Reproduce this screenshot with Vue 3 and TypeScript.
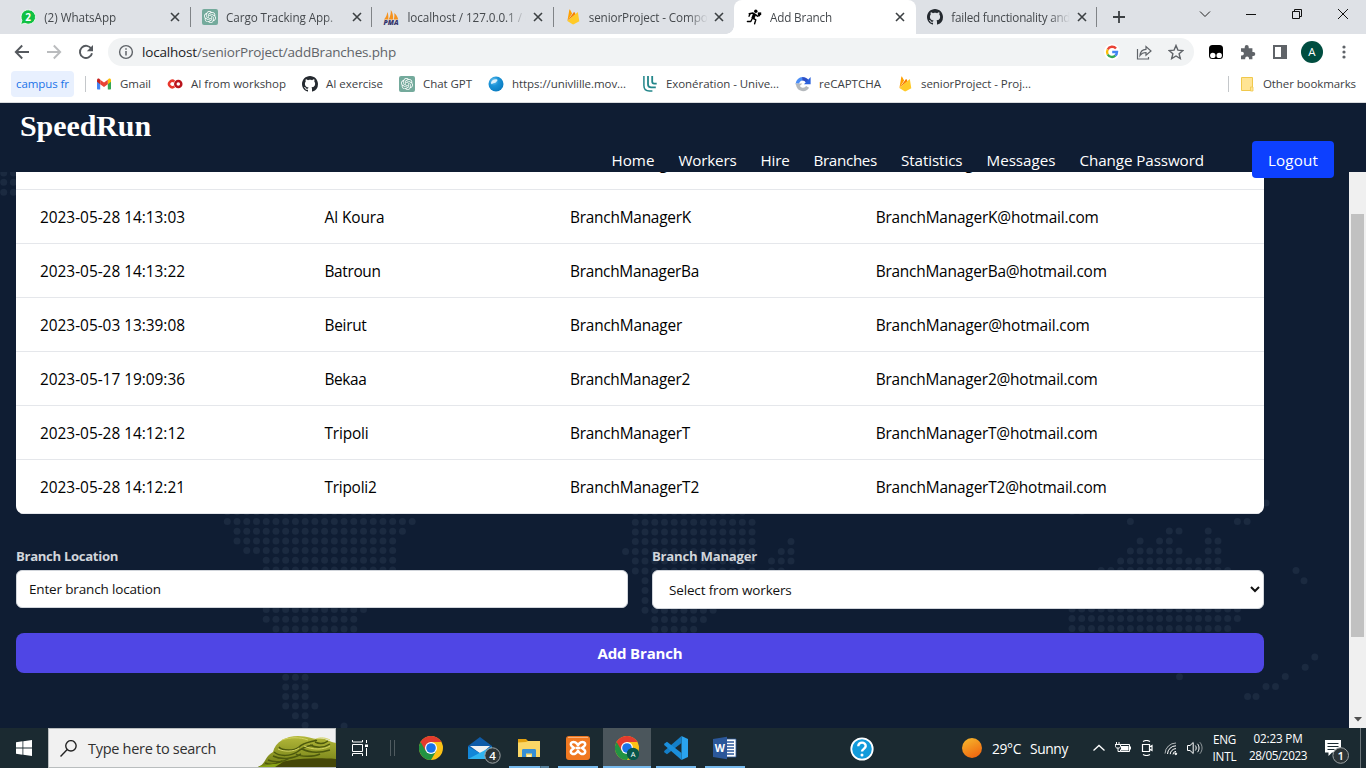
<script setup lang="ts">
interface Tab { icon: string; title: string; width: number; active?: boolean }
interface Bookmark { icon: string; label: string; width: number }
interface Row { date: string; place: string; manager: string; mail: string; w: number[] }
interface Mark { text: string; x: number; y: number; kind: string }

// Spreads the letters of an element so that its text takes the given width.
const vFit = {
  mounted(el: HTMLElement, binding: { value: number }) {
    const length = (el.textContent || '').length
    if (!length || !binding.value) return
    const natural = el.getBoundingClientRect().width
    el.style.letterSpacing = ((binding.value - natural) / length).toFixed(3) + 'px'
  },
}

// Lettering that sits on top of an icon.
const marks: Record<string, Mark> = {
  whatsapp: { text: '2', x: 8.1, y: 11.6, kind: 'count' },
  pma: { text: 'PMA', x: 8, y: 15.8, kind: 'pma' },
  chromeuser: { text: 'A', x: 18, y: 20.7, kind: 'user' },
  mail: { text: '4', x: 24.5, y: 23.6, kind: 'badge' },
  word: { text: 'W', x: 6.9, y: 16, kind: 'word' },
}

const tabs: Tab[] = [
  { icon: 'whatsapp', title: '(2) WhatsApp', width: 72 },
  { icon: 'gpt', title: 'Cargo Tracking App.', width: 107 },
  { icon: 'pma', title: 'localhost / 127.0.0.1 / c', width: 123 },
  { icon: 'firebase', title: 'seniorProject - Compo', width: 119 },
  { icon: 'runner', title: 'Add Branch', width: 62, active: true },
  { icon: 'github', title: 'failed functionality and', width: 119 },
]

const bookmarks: Bookmark[] = [
  { icon: 'gmail', label: 'Gmail', width: 31 },
  { icon: 'co', label: 'AI from workshop', width: 95 },
  { icon: 'github', label: 'AI exercise', width: 57 },
  { icon: 'gpt', label: 'Chat GPT', width: 49 },
  { icon: 'globe', label: 'https://univlille.mov...', width: 114 },
  { icon: 'lille', label: 'Exonération - Unive...', width: 113 },
  { icon: 'recaptcha', label: 'reCAPTCHA', width: 62 },
  { icon: 'firebase', label: 'seniorProject - Proj...', width: 110 },
]

const links = [
  { label: 'Home', width: 43 },
  { label: 'Workers', width: 58 },
  { label: 'Hire', width: 29 },
  { label: 'Branches', width: 63.5 },
  { label: 'Statistics', width: 61.5 },
  { label: 'Messages', width: 69 },
  { label: 'Change Password', width: 124.5 },
]

const rows: Row[] = [
  { date: '', place: '', manager: 'BranchManager', mail: 'BranchManager', w: [0, 0, 112, 112] },
  { date: '2023-05-28 14:13:03', place: 'Al Koura', manager: 'BranchManagerK', mail: 'BranchManagerK@hotmail.com', w: [145, 60, 121, 223] },
  { date: '2023-05-28 14:13:22', place: 'Batroun', manager: 'BranchManagerBa', mail: 'BranchManagerBa@hotmail.com', w: [145, 56, 129, 231] },
  { date: '2023-05-03 13:39:08', place: 'Beirut', manager: 'BranchManager', mail: 'BranchManager@hotmail.com', w: [145, 42, 112, 214] },
  { date: '2023-05-17 19:09:36', place: 'Bekaa', manager: 'BranchManager2', mail: 'BranchManager2@hotmail.com', w: [145, 42, 120, 222] },
  { date: '2023-05-28 14:12:12', place: 'Tripoli', manager: 'BranchManagerT', mail: 'BranchManagerT@hotmail.com', w: [145, 44, 120, 222] },
  { date: '2023-05-28 14:12:21', place: 'Tripoli2', manager: 'BranchManagerT2', mail: 'BranchManagerT2@hotmail.com', w: [145, 52, 129, 231] },
]

// World map: runs of dots as [origin x, y, first column, last column].
const runs: number[][] = [
  [3.7, 173, 0, 1], [3.7, 182.3, 0, 1], [3.7, 192.3, 0, 1],
  [227.3, 511.7, 0, 17], [227.3, 521.5, 0, 19], [227.3, 531.3, 1, 18], [227.3, 541, 1, 17],
  [227.3, 550.6, 2, 17], [227.3, 560.3, 4, 17], [227.3, 570, 4, 17], [227.3, 609.6, 4, 14],
  [227.3, 619.3, 4, 13], [227.3, 629, 5, 13], [227.3, 677.2, 6, 8], [227.3, 687, 6, 8],
  [227.3, 696.6, 6, 8], [227.3, 706, 6, 9], [227.3, 715.7, 7, 8], [227.3, 725.3, 8, 8], [227.3, 726, 12, 12],
  [635.3, 512, 0, 11], [635.3, 522.3, 0, 12], [635.3, 532.1, 0, 12], [635.3, 541.6, 0, 12], [635.3, 541.6, 16, 16],
  [635.3, 551.4, -1, 12], [635.3, 551.4, 15, 16], [635.3, 561, 0, 12], [635.3, 561, 14, 16],
  [635.3, 571, 0, 12], [635.3, 571, 14, 15], [635.3, 580.7, 1, 1], [635.3, 590.5, 1, 1], [635.3, 600.5, 1, 1],
  [635.3, 610.2, 1, 8], [635.3, 619.4, 2, 7], [635.3, 629.2, 2, 6],
  [1072, 511.5, 0, 1], [1072, 521.6, 6, 6], [1072, 521.6, 17, 18], [1072, 531, 10, 11], [1072, 531, 14, 14],
  [1072, 541, 7, 7], [1072, 541, 9, 10], [1072, 541, 14, 15], [1072, 551, 6, 11], [1072, 551, 14, 15],
  [1072, 561, 5, 15], [1072, 570.5, 3, 16], [1072, 609, 0, 17], [1072, 618.6, 0, 17], [1072, 628.4, 0, 16],
]
const singles: number[][] = [
  [1266, 503], [1296, 570.4], [1304, 580.8], [1314.8, 657], [1305.2, 667.3], [1285.3, 676.6],
  [1266, 686.4], [1275.5, 686.4], [1247.6, 696.6], [1256, 696.6], [1179.5, 676.7],
]
const dots: number[][] = [...singles]
for (const [x, y, from, to] of runs)
  for (let k = from; k <= to; k++) dots.push([x + k * 9.73, y])

const apps = [
  { icon: 'chrome', line: '' },
  { icon: 'mail', line: '' },
  { icon: 'explorer', line: 'split' },
  { icon: 'xampp', line: 'open' },
  { icon: 'chromeuser', line: 'active' },
  { icon: 'vscode', line: 'open' },
  { icon: 'word', line: 'open' },
]
const tray = ['chevron', 'battery', 'meet', 'wifi', 'volume']
</script>

<template>
  <div class="screen">
    <svg class="defs" aria-hidden="true">
      <defs>
        <linearGradient id="sunfill" x1="0.2" y1="0" x2="0.7" y2="1">
          <stop offset="0" stop-color="#f5b52c" /><stop offset="1" stop-color="#f0650f" />
        </linearGradient>
        <linearGradient id="hill" x1="0" y1="0" x2="0" y2="1">
          <stop offset="0" stop-color="#b4b83a" /><stop offset="1" stop-color="#6f7d14" />
        </linearGradient>
        <radialGradient id="ball" cx="0.35" cy="0.3" r="0.8">
          <stop offset="0" stop-color="#7cc9ef" /><stop offset="0.4" stop-color="#1c94d8" /><stop offset="1" stop-color="#0878bd" />
        </radialGradient>
      </defs>
      <symbol id="i-whatsapp" viewBox="0 0 16 16">
        <path d="M8.2.8a7.2 7.2 0 1 1-3.3 13.5L.7 15.4l1.2-4A7.2 7.2 0 0 1 8.2.8z" fill="#10c042" stroke="#fff" stroke-width=".8" />
      </symbol>
      <symbol id="i-gpt" viewBox="0 0 16 16">
        <rect width="16" height="16" rx="2" fill="#74aa9c" />
        <path transform="translate(2 2) scale(.5)" fill="#fff" d="M22.2819 9.8211a5.9847 5.9847 0 0 0-.5157-4.9108 6.0462 6.0462 0 0 0-6.5098-2.9A6.0651 6.0651 0 0 0 4.9807 4.1818a5.9847 5.9847 0 0 0-3.9977 2.9 6.0462 6.0462 0 0 0 .7427 7.0966 5.98 5.98 0 0 0 .511 4.9107 6.051 6.051 0 0 0 6.5146 2.9001A5.9847 5.9847 0 0 0 13.2599 24a6.0557 6.0557 0 0 0 5.7718-4.2058 5.9894 5.9894 0 0 0 3.9977-2.9001 6.0557 6.0557 0 0 0-.7475-7.0729zm-9.022 12.6081a4.4755 4.4755 0 0 1-2.8764-1.0408l.1419-.0804 4.7783-2.7582a.7948.7948 0 0 0 .3927-.6813v-6.7369l2.02 1.1686a.071.071 0 0 1 .038.052v5.5826a4.504 4.504 0 0 1-4.4945 4.4944zm-9.6607-4.1254a4.4708 4.4708 0 0 1-.5346-3.0137l.142.0852 4.783 2.7582a.7712.7712 0 0 0 .7806 0l5.8428-3.3685v2.3324a.0804.0804 0 0 1-.0332.0615L9.74 19.9502a4.4992 4.4992 0 0 1-6.1408-1.6464zM2.3408 7.8956a4.485 4.485 0 0 1 2.3655-1.9728V11.6a.7664.7664 0 0 0 .3879.6765l5.8144 3.3543-2.0201 1.1685a.0757.0757 0 0 1-.071 0l-4.8303-2.7865A4.504 4.504 0 0 1 2.3408 7.872zm16.5963 3.8558L13.1038 8.364 15.1192 7.2a.0757.0757 0 0 1 .071 0l4.8303 2.7913a4.4944 4.4944 0 0 1-.6765 8.1042v-5.6772a.79.79 0 0 0-.407-.667zm2.0107-3.0231l-.142-.0852-4.7735-2.7818a.7759.7759 0 0 0-.7854 0L9.409 9.2297V6.8974a.0662.0662 0 0 1 .0284-.0615l4.8303-2.7866a4.4992 4.4992 0 0 1 6.6802 4.66zM8.3065 12.863l-2.02-1.1638a.0804.0804 0 0 1-.038-.0567V6.0742a4.4992 4.4992 0 0 1 7.3757-3.4537l-.142.0805L8.704 5.459a.7948.7948 0 0 0-.3927.6813zm1.0976-2.3654l2.602-1.4998 2.6069 1.4998v2.9994l-2.5974 1.4997-2.6067-1.4997Z" />
      </symbol>
      <symbol id="i-pma" viewBox="0 0 16 16">
        <path d="M1 10.500C3 8 4 6 4.400 3c.9 2 1.100 4.500.9 7.500zM5.600 10.500C7.500 7 8 4 7.800 1c2 2.500 2.600 6 2.200 9.500zM10.600 10.500c.9-2.400 1-4.400.6-6.500 2 1.500 3.400 3.800 4 6.500z" fill="#f5921e" />
      </symbol>
      <symbol id="i-firebase" viewBox="0 0 16 16">
        <path d="M2.400 11.900 4.300.9c.1-.4.6-.5.8-.1l2 3.700z" fill="#ffa000" />
        <path d="m2.400 11.900 6.400-8.600c.2-.3.500-.3.700 0l1 2z" fill="#f57c00" />
        <path d="M2.400 12.100 12.200 3.400c.3-.2.600-.1.700.2l1.400 8.600-5.500 3.100c-.5.200-.9.200-1.300 0z" fill="#ffca28" />
      </symbol>
      <symbol id="i-runner" viewBox="0 0 16 16">
        <circle cx="9.800" cy="2.300" r="1.700" />
        <path d="M3.200 4.800 7 4l2.600 1.600 1.800 1.600 2.200-.7M6.600 8.800l3.200 2-1.200 4M6.300 9.500l-1.500 3H1.400M4.200 4.800 3 7.200" fill="none" stroke="#000" stroke-width="1.400" stroke-linejoin="round" stroke-linecap="round" />
        <path d="M7.200 4 10 6 8 10.400 5.300 9z" /><rect x="11.800" y="3.400" width="3.400" height="2.600" />
      </symbol>
      <symbol id="i-github" viewBox="0 0 16 16">
        <path fill="#24292f" d="M8 0C3.580 0 0 3.580 0 8c0 3.540 2.290 6.530 5.470 7.590.4.070.55-.17.55-.38 0-.19-.01-.82-.01-1.490-2.010.37-2.530-.49-2.690-.94-.09-.23-.48-.94-.82-1.130-.28-.15-.68-.52-.01-.53.63-.01 1.080.58 1.230.82.72 1.210 1.870.87 2.330.66.07-.52.28-.87.51-1.070-1.780-.2-3.640-.89-3.640-3.950 0-.87.31-1.590.82-2.150-.08-.2-.36-1.020.08-2.120 0 0 .67-.21 2.200.82.64-.18 1.320-.27 2-.27s1.360.09 2 .27c1.530-1.040 2.200-.82 2.200-.82.44 1.100.16 1.920.08 2.120.51.56.82 1.270.82 2.150 0 3.070-1.870 3.750-3.650 3.950.29.25.54.73.54 1.480 0 1.070-.01 1.930-.01 2.200 0 .21.15.46.55.38A8.010 8.010 0 0 0 16 8c0-4.420-3.580-8-8-8z" />
      </symbol>
      <symbol id="i-gmail" viewBox="0 0 16 16">
        <path d="M1 4.200v8.300c0 .6.400 1 1 1h2.200V7z" fill="#4285f4" /><path d="M15 4.200v8.300c0 .6-.4 1-1 1h-2.200V7z" fill="#34a853" />
        <path d="M11.800 3.800v4.400L15 5.800V4.200c0-1.500-1.500-2-2.500-1.200z" fill="#fbbc04" /><path d="M1 4.200v1.600l3.200 2.400V3.800L3.500 3C2.500 2.200 1 2.700 1 4.200z" fill="#c5221f" />
        <path d="M4.200 8.200V3.700L8 6.500l3.800-2.800v4.500L8 11z" fill="#ea4335" />
      </symbol>
      <symbol id="i-co" viewBox="0 0 16 16" fill="none" stroke-width="2.500">
        <path d="M7.400 5.600A3.200 3.200 0 1 0 7.400 10.400" stroke="#e8372c" /><circle cx="11.300" cy="8" r="3" stroke="#b9151d" />
      </symbol>
      <symbol id="i-globe" viewBox="0 0 16 16">
        <circle cx="8" cy="8" r="7.500" fill="url(#ball)" /><path d="M3 6.500c1-2.500 3-3.500 5.500-3.300 1.800.3.500 2.300-.7 3.200C6 7.300 4.500 7 3.400 8.300z" fill="#ddf1fb" />
      </symbol>
      <symbol id="i-lille" viewBox="0 0 16 16" fill="none" stroke="#23868a">
        <path d="M1.900 0v9.500c0 3.500 2.200 5.500 5.500 5.500h3" stroke-width="1.500" /><path d="M6 0v8.300c0 2.200 1.200 3.100 3.200 3.100h4.600" stroke-width="1.800" /><path d="M10.200 0v5.500c0 1.500.6 2.100 2 2.100h2.500" stroke-width="1.800" />
      </symbol>
      <symbol id="i-recaptcha" viewBox="0 0 16 16" fill="none" stroke-width="3.500">
        <path d="M2.400 7.600A5.600 5.600 0 0 1 7.600 2.700" stroke="#4a8df6" /><path d="M7.200 2.700a5.800 5.800 0 0 1 5.200 2.900" stroke="#2c50c8" /><path d="M15.600 1v7.200H9z" fill="#2c62dc" stroke="none" /><path d="M2.800 9c1 5.200 7.400 5.800 9.800 1.900" stroke="#b5b9bd" /><path d="M0 7.600h7.400L3 11.500z" fill="#b5b9bd" stroke="none" />
      </symbol>
      <symbol id="i-chrome" viewBox="0 0 24 24">
        <circle cx="12" cy="12" r="12" fill="#fbc116" />
        <path d="M1.600 6A12 12 0 0 0 12 24l5.200-9L12 12z" fill="#229342" /><path d="M12 6h10.400A12 12 0 0 0 1.600 6l5.200 9z" fill="#e33b2e" />
        <circle cx="12" cy="12" r="6" fill="#fff" /><circle cx="12" cy="12" r="4.800" fill="#1a73e8" />
      </symbol>
      <symbol id="i-chromeuser" viewBox="0 0 24 24">
        <use href="#i-chrome" width="24" height="24" /><circle cx="18" cy="18" r="6.200" fill="#07564b" />
      </symbol>
      <symbol id="i-mail" viewBox="0 0 34 28">
        <path d="M0 10 12 1l12 9v13H0z" fill="#0f5ba8" /><path d="M2 10h20l-9 8z" fill="#f1f1f1" /><path d="M0 10.500 13.500 18 0 23z" fill="#1286d8" /><path d="M24 10.500 0 23h24z" fill="#30b4f0" />
        <circle cx="24.500" cy="19.500" r="7.700" fill="#2c3437" stroke="#9ca2a4" stroke-width="1" />
      </symbol>
      <symbol id="i-explorer" viewBox="0 0 24 24">
        <path d="M1 3h8l2 2v2H1z" fill="#e2a00f" /><path d="M1 6.500 9 6l2-1h12v16H1z" fill="#fbd766" /><path d="M5 21v-6.500c0-1 .5-1.500 1.500-1.500h11c1 0 1.500.5 1.500 1.500V21h-4v-3.500H9V21z" fill="#378fd5" /><path d="M10 19h4v2h-4z" fill="#fff3bd" />
      </symbol>
      <symbol id="i-xampp" viewBox="0 0 24 24">
        <rect width="24" height="24" rx="3" fill="#f07820" /><path d="M2 1.500h20" stroke="#f8b07a" stroke-width="1" />
        <path d="M12 9.200C10.800 6.500 8 5.300 6 6.300 4.200 7.300 4.600 9.200 5.800 10.200L8 12l-2.200 1.800c-1.200 1-1.600 3 .2 3.900 2 1 4.800-.2 6-2.900 1.200 2.700 4 3.900 6 2.900 1.800-.9 1.400-2.900.2-3.900L16 12l2.200-1.800c1.200-1 1.600-2.900-.2-3.900-2-1-4.800.2-6 2.900zM9.500 12h5" fill="none" stroke="#fff" stroke-width="2.500" stroke-linejoin="round" />
      </symbol>
      <symbol id="i-vscode" viewBox="0 0 24 24">
        <path d="M17.500 0 24 3v18l-6.500 3z" fill="#2aa3ee" /><path d="M17.500 0v7L3 18.300.2 16.200v-1.200z" fill="#147fc8" /><path d="M17.500 24v-7L3 5.700.2 7.800V9z" fill="#1b8fdc" />
      </symbol>
      <symbol id="i-word" viewBox="0 0 24 24">
        <path d="M13 3h10v18H13z" fill="#fff" stroke="#2b5797" stroke-width=".8" /><path d="M14 6h7M14 9h7M14 12h7M14 15h7M14 18h7" stroke="#2b579a" stroke-width="1.300" /><path d="M0 3 14 .8v22.400L0 21z" fill="#2b579a" />
      </symbol>
      <symbol id="i-chevron" viewBox="0 0 16 16"><path d="m2.500 10.500 5.500-5 5.500 5" fill="none" stroke="#fff" stroke-width="1.300" /></symbol>
      <symbol id="i-battery" viewBox="0 0 16 16" fill="none" stroke="#fff">
        <path d="M5.500 4.500h9v7H5.500v-2" /><path d="M6 6h7.500v4.500H6zM14.800 6.500h1.200v3h-1.200z" fill="#fff" stroke="none" /><path d="M1.500 2v2.500M4 2v2.500M0 4.500h5.500v1.800c0 1.200-1 1.700-1.700 1.700H2C1 8 .5 7 .5 6zM3 8v3.500h2.500" />
      </symbol>
      <symbol id="i-meet" viewBox="0 0 16 16" fill="none" stroke="#fff" stroke-width="1.200">
        <path d="M3.500 4.500h7v7h-7zM10.500 7l2.500-1.500v5L10.500 9M4 1.500C6 .3 9 .3 11 1.500M4 14.500c2 1.200 5 1.200 7 0" />
      </symbol>
      <symbol id="i-wifi" viewBox="0 0 16 16" fill="none" stroke="#fff">
        <path d="M2 13.500A11 11 0 0 1 13 3" opacity=".65" /><path d="M4.500 14A8.500 8.500 0 0 1 13 5.800M7.200 14.200A6 6 0 0 1 13 8.600M10 14.400a3.200 3.200 0 0 1 3-3" /><circle cx="12.800" cy="13.800" r=".9" fill="#fff" />
      </symbol>
      <symbol id="i-volume" viewBox="0 0 16 16" fill="none" stroke="#fff">
        <path d="M.5 5.500H3l3.200-3v11L3 10.500H.500zM8.300 5.500c1.200 1.500 1.200 3.500 0 5M10.500 3.800c2 2.500 2 6 0 8.400" /><path d="M12.800 2.200c3 3.500 3 8.100 0 11.600" opacity=".5" />
      </symbol>
    </svg>

    <div class="tabstrip">
      <div v-for="(t, i) in tabs" :key="i" class="tab" :class="{ active: t.active, bare: i === 3 }">
        <svg class="ico"><use :href="'#i-' + t.icon" /><text v-if="marks[t.icon]" class="mark" :class="marks[t.icon].kind" :x="marks[t.icon].x" :y="marks[t.icon].y">{{ marks[t.icon].text }}</text></svg>
        <div class="title"><span v-fit="t.width" class="fit">{{ t.title }}</span></div>
        <svg class="close" viewBox="0 0 10 10"><path d="m1 1 8 8M9 1 1 9" stroke="#3c4043" stroke-width="1.600" /></svg>
      </div>
      <svg class="plus" viewBox="0 0 12 12"><path d="M6 0v12M0 6h12" stroke="#3c4043" stroke-width="1.800" /></svg>
      <div class="winbtns">
        <svg viewBox="0 0 12 12"><path d="m1 3.500 5 5 5-5" fill="none" stroke="#222" /></svg>
        <svg viewBox="0 0 12 12"><path d="M1 6.500h10" stroke="#111" /></svg>
        <svg viewBox="0 0 12 12"><path d="M1.500 3.500h7v7h-7zM3.500 3.500v-2h7v7h-2" fill="none" stroke="#111" /></svg>
        <svg viewBox="0 0 12 12"><path d="m1 1 10 10M11 1 1 11" stroke="#111" /></svg>
      </div>
    </div>

    <div class="toolbar">
      <svg class="navi" viewBox="0 0 16 16"><path d="M15 8H2M8.200 1.500 1.800 8l6.400 6.500" fill="none" stroke="#55595e" stroke-width="1.900" /></svg>
      <svg class="navi" viewBox="0 0 16 16"><path d="M1 8h13M7.800 1.500 14.200 8l-6.400 6.500" fill="none" stroke="#babcbe" stroke-width="1.900" /></svg>
      <svg class="navi" viewBox="0 0 16 16"><path d="M13.400 5A6.100 6.100 0 1 0 14 9.200" fill="none" stroke="#55595e" stroke-width="1.900" /><path d="M15 1v6.200H8.800z" fill="#55595e" /></svg>
      <div class="omnibox">
        <svg class="info" viewBox="0 0 16 16"><circle cx="8" cy="8" r="6.400" fill="none" stroke="#5f6368" stroke-width="1.400" /><path d="M8 7v4.600M8 4.200v1.600" stroke="#5f6368" stroke-width="1.500" /></svg>
        <span v-fit="254" class="fit url"><b>localhost</b>/seniorProject/addBranches.php</span>
        <div class="actions">
          <svg viewBox="0 0 16 16"><circle cx="8" cy="8" r="8" fill="#fff" /><g fill="none" stroke-width="2.400"><path d="M12 4.600A5 5 0 0 0 3.700 5.500" stroke="#ea4335" /><path d="M3.700 5.500a5 5 0 0 0 0 5" stroke="#fbbc05" /><path d="M3.700 10.500a5 5 0 0 0 7.600 1.200" stroke="#34a853" /><path d="M11.300 11.700A5 5 0 0 0 13 8H8.200" stroke="#4285f4" /></g></svg>
          <svg viewBox="0 0 16 16" fill="none" stroke="#5f6368" stroke-width="1.200"><path d="M1.500 5v10h11v-2M4 11.500c.3-4 2.500-6 6-6.200V2.500L15 7l-5 4.300V8.500c-2.600 0-4.500.8-6 3z" /></svg>
          <svg viewBox="0 0 16 16"><path d="m8 1.500 1.900 4.600 5 .4-3.800 3.200 1.200 4.900L8 12l-4.300 2.600 1.200-4.900L1.100 6.500l5-.4z" fill="none" stroke="#5f6368" stroke-width="1.400" /></svg>
        </div>
      </div>
      <div class="extensions">
        <svg viewBox="0 0 16 16"><rect x="1" y="1" width="14" height="14" rx="3.500" /><circle cx="4.800" cy="11.400" r="2.700" fill="#fff" /><circle cx="11.200" cy="11.400" r="2.700" fill="#fff" /></svg>
        <svg viewBox="0 0 16 16"><path d="M1 4.300h3.700V3a2 2 0 0 1 4 0v1.300h3.700V8H13.300a2 2 0 0 1 0 4h-.9v3.200H9v-.9a1.900 1.900 0 0 0-3.800 0v.9H1v-3.700h1a1.900 1.900 0 0 0 0-3.800H1z" fill="#5f6368" /></svg>
        <svg viewBox="0 0 16 16"><path d="M1 1h14v14H1zM3 3v10h6V3z" fill="#5f6368" fill-rule="evenodd" /></svg>
        <span class="avatar">A</span>
        <svg viewBox="0 0 16 16" fill="#5f6368"><circle cx="8" cy="3" r="1.600" /><circle cx="8" cy="8" r="1.600" /><circle cx="8" cy="13" r="1.600" /></svg>
      </div>
    </div>

    <div class="bookmarks">
      <span class="group"><span v-fit="53" class="fit">campus fr</span></span>
      <i class="rule"></i>
      <div v-for="b in bookmarks" :key="b.label" class="bookmark">
        <svg class="ico"><use :href="'#i-' + b.icon" /></svg>
        <span v-fit="b.width" class="fit">{{ b.label }}</span>
      </div>
      <i class="rule last"></i>
      <div class="bookmark folder">
        <svg class="ico" viewBox="0 0 16 16"><path d="M2.500 1.500h11v13h-11z" fill="#ffe494" stroke="#f0c84c" /><path d="M11.500 11h2.500v4h-2.500z" fill="#ffe494" stroke="#f0c84c" stroke-width=".8" /></svg>
        <span v-fit="93" class="fit">Other bookmarks</span>
      </div>
    </div>

    <header class="site">
      <div v-fit="131" class="brand fit">SpeedRun</div>
      <nav>
        <a v-for="l in links" :key="l.label" v-fit="l.width" class="fit">{{ l.label }}</a>
        <button class="logout"><span v-fit="50" class="fit">Logout</span></button>
      </nav>
    </header>

    <div class="viewport">
      <main>
        <svg class="map" viewBox="0 172 1349 556"><circle v-for="(d, i) in dots" :key="i" :cx="d[0]" :cy="d[1]" r="3.500" /></svg>
        <div class="table">
          <div v-for="(r, i) in rows" :key="i" class="row">
            <div><span v-fit="r.w[0]" class="fit">{{ r.date }}</span></div>
            <div><span v-fit="r.w[1]" class="fit">{{ r.place }}</span></div>
            <div><span v-fit="r.w[2]" class="fit">{{ r.manager }}</span></div>
            <div><span v-fit="r.w[3]" class="fit">{{ r.mail }}</span></div>
          </div>
        </div>
        <form @submit.prevent>
          <div class="field">
            <label><span v-fit="102" class="fit">Branch Location</span></label>
            <input type="text" placeholder="Enter branch location" />
          </div>
          <div class="field">
            <label><span v-fit="105" class="fit">Branch Manager</span></label>
            <select><option>Select from workers</option></select>
          </div>
          <button class="submit"><span v-fit="85" class="fit">Add Branch</span></button>
        </form>
      </main>
      <div class="scrollbar"><div class="thumb"></div><svg viewBox="0 0 8 5"><path d="M0 0h8L4 4.500z" fill="#505050" /></svg></div>
    </div>

    <footer class="taskbar">
      <div class="start"><svg viewBox="0 0 16 16" fill="#fff"><path d="M0 2.200 6.500 1.300v6.300H0zM7.300 1.200 16 0v7.600H7.300zM0 8.400h6.500v6.300L0 13.800zM7.300 8.400H16V16l-8.700-1.200z" /></svg></div>
      <div class="search">
        <svg class="glass" viewBox="0 0 16 16" fill="none" stroke="#222" stroke-width="1.300"><circle cx="10.300" cy="5.500" r="4.900" /><path d="M6.800 9 .5 15.500" /></svg>
        <span v-fit="128" class="fit">Type here to search</span>
        <svg class="terraces" viewBox="0 0 78 32">
          <path d="M0 32C9 28 6 22 15 17 17 7 28 1 40 1c10 0 14 3 19 3 8-2 12 3 19 4v24z" fill="url(#hill)" />
          <path d="M21 12c3 4 15 4 20 0 5-5 13-5 18-7M16 17c6 5 17 4 23 0 6-5 10-6 16-7M15 21c8 4 20 3 28-2M10 25c7 3 16 2 22-2M7 28c5 2 12 1 17-2M52 10c6 3 14 3 20-1M44 14c8 4 18 4 28 1M38 19c4 3 18 3 24 0M57 7c4 2 9 2 13-1" fill="none" stroke="#4d590d" stroke-width="1.500" />
          <path d="M24 5c8-3 18-3 26 0M58 4c5-2 10-1 14 1M20 14c6 3 16 3 21-1M46 11c8 4 20 4 26 0" fill="none" stroke="#d2d363" stroke-width="1" />
          <path d="M0 32c19-3 35-11 78-8v8z" fill="#454708" /><path d="M0 32c7-3 16-2 25-5l-8 5z" fill="#87a315" />
        </svg>
      </div>
      <div class="view"><svg viewBox="0 0 16 16" fill="none" stroke="#fff"><path d="M.5 4.500h10v7H.500zM.5 0v2h10V0M.5 16v-2.500h10V16M14.500 0v3M14.500 8v8" /><path d="M13 4.500h3V7h-3z" fill="#fff" stroke="none" /></svg></div>
      <div class="grip"></div>
      <div class="apps">
        <div v-for="a in apps" :key="a.icon" class="app" :class="a.line">
          <svg :class="{ wide: a.icon === 'mail' }"><use :href="'#i-' + a.icon" /><text v-if="marks[a.icon]" class="mark" :class="marks[a.icon].kind" :x="marks[a.icon].x" :y="marks[a.icon].y">{{ marks[a.icon].text }}</text></svg>
        </div>
      </div>
      <div class="help"><svg viewBox="0 0 24 24"><circle cx="12" cy="12" r="10.700" fill="#129bdb" stroke="#fff" stroke-width="1.800" /><path d="M8.300 9.300c0-5 7.600-4.600 7.400-.2-.1 2.700-3.700 2.800-3.700 5.500" fill="none" stroke="#fff" stroke-width="2.400" /><circle cx="12" cy="17.900" r="1.500" fill="#fff" /></svg></div>
      <div class="weather"><svg viewBox="0 0 20 20"><circle cx="10" cy="10" r="10" fill="url(#sunfill)" /></svg><span v-fit="29" class="fit">29°C</span><span v-fit="38" class="fit">Sunny</span></div>
      <div class="tray"><svg v-for="t in tray" :key="t"><use :href="'#i-' + t" /></svg></div>
      <div class="lang"><span v-fit="23" class="fit">ENG</span><span v-fit="24" class="fit">INTL</span></div>
      <div class="clock"><span v-fit="49" class="fit">02:23 PM</span><span v-fit="58" class="fit">28/05/2023</span></div>
      <div class="notice"><svg viewBox="0 0 26 26"><path d="M1 2h16v12.500H8L4.500 18v-3.500H1z" fill="#fff" /><path d="M3.500 5.500h11M3.500 8.500h11M3.500 11.500h7" stroke="#1b2a31" stroke-width="1.200" /><circle cx="16.700" cy="17.500" r="7.800" fill="#2c3437" stroke="#9ca2a4" /><text x="16.700" y="21.500" class="mark badge">1</text></svg></div>
    </footer>
  </div>
</template>

<style>
html, body { overflow: hidden; }
</style>

<style scoped>
* { box-sizing: border-box; }
.screen { width: 1366px; height: 768px; display: flex; flex-direction: column; overflow: hidden; background: #fff; font-family: "Open Sans", "Noto Sans", sans-serif; }
.defs { position: absolute; width: 0; height: 0; }
svg { display: block; flex: none; }
.fit { display: inline-block; white-space: nowrap; flex: none; }
.ico { width: 16px; height: 16px; overflow: visible; }
.mark { font-family: "Open Sans", sans-serif; fill: #fff; text-anchor: middle; }
.mark.count { font-size: 10px; font-weight: 700; }
.mark.pma { font-size: 6.800px; font-weight: 800; font-style: italic; fill: #35356b; }
.mark.user { font-size: 7.500px; }
.mark.badge { font-size: 11.500px; font-weight: 600; }
.mark.word { font-size: 10.500px; font-weight: 700; }

.tabstrip { height: 34px; flex: none; display: flex; align-items: stretch; padding-left: 9.200px; background: #dee1e6; }
.tab { width: 181.300px; flex: none; display: flex; align-items: center; padding-left: 11.600px; font-size: 11.700px; color: #45494d; position: relative; }
.tab:first-child { padding-left: 11px; }
.tab:not(.active):not(.bare)::after { content: ""; position: absolute; right: -.5px; top: 7px; width: 1px; height: 20px; background: #808387; }
.title { width: 120px; margin-left: 8px; overflow: hidden; line-height: 18px; -webkit-mask-image: linear-gradient(90deg, #000 82%, transparent 99%); mask-image: linear-gradient(90deg, #000 82%, transparent 99%); }
.close { width: 10px; height: 10px; margin-left: 5.500px; }
.tab.active { background: #fff; border-radius: 8px 8px 0 0; }
.tab.active::before, .tab.active::after { content: ""; position: absolute; bottom: 0; width: 8px; height: 8px; }
.tab.active::before { left: -8px; background: radial-gradient(circle at 0 0, transparent 7.500px, #fff 8px); }
.tab.active::after { right: -8px; background: radial-gradient(circle at 100% 0, transparent 7.500px, #fff 8px); }
.plus { width: 12px; height: 12px; margin: 11px 0 0 16px; }
.winbtns { margin-left: auto; display: flex; gap: 34px; padding: 8px 17px 0 0; }
.winbtns svg { width: 12px; height: 12px; }

.toolbar { height: 36px; flex: none; display: flex; align-items: center; padding-left: 14px; }
.navi { width: 16px; height: 16px; margin-right: 16px; }
.omnibox { width: 1086px; height: 28px; margin-left: -2px; border-radius: 14px; background: #f1f3f4; display: flex; align-items: center; padding: 0 10px; }
.info { width: 16px; height: 16px; margin-right: 8px; }
.url { font-size: 13.500px; color: #5f6368; }
.url b { font-weight: 400; color: #202124; }
.actions { margin-left: auto; display: flex; gap: 16px; }
.actions svg, .extensions svg { width: 16px; height: 16px; }
.extensions { display: flex; align-items: center; gap: 16px; margin-left: 14px; }
.avatar { width: 22px; height: 22px; margin: 0 -3px; border-radius: 50%; background: #004d40; color: #fff; font-size: 11.500px; line-height: 22px; text-align: center; }

.bookmarks { height: 33px; flex: none; display: flex; align-items: center; gap: 16px; padding: 0 10px 5px 11px; border-bottom: 1px solid #d9dbde; font-size: 11.500px; color: #3c4043; line-height: 18px; }
.group { height: 26px; margin-top: 1px; padding: 4px 5px 0; background: #e8f0fe; border-radius: 4px; color: #1a73e8; margin-right: -5px; }
.rule { width: 1px; height: 16px; background: #c4c7ca; margin-right: -6px; }
.rule.last { margin: 0 -6px 0 auto; }
.bookmark { display: flex; align-items: center; gap: 8px; }

.site { height: 69px; flex: none; background: #0f1d33; position: relative; z-index: 2; padding-left: 20px; color: #fff; }
.brand { font: bold 30px/36px "Liberation Serif", serif; display: block; width: max-content; padding-top: 5px; height: 38px; }
nav { display: flex; align-items: center; justify-content: flex-end; gap: 24px; padding-right: 32px; font-size: 15.200px; height: 37px; }
.logout { width: 82px; height: 37px; margin-left: 24px; padding: 0; border: 0; border-radius: 4px; background: #0d40ff; color: #fff; font: 15.200px "Open Sans", sans-serif; }

.viewport { height: 556px; flex: none; display: flex; background: #0f1d33; overflow: hidden; }
main { width: 1349px; position: relative; padding: 0 85px 0 16px; overflow: hidden; }
.map { position: absolute; left: 0; top: 0; width: 1349px; height: 556px; fill: #1b2a40; }
.table { position: relative; margin-top: -36px; background: #fff; border-radius: 0 0 8px 8px; overflow: hidden; font-size: 15.400px; color: #000; }
.row { height: 54px; display: grid; grid-template-columns: 284.500px 245.500px 305.700px 1fr; align-items: center; padding: 2px 0 0 24px; border-bottom: 1px solid #e5e7eb; line-height: 24px; }
form { position: relative; display: grid; grid-template-columns: 612px 612px; column-gap: 24px; padding-top: 32px; }
.field { height: 87px; }
label { display: block; height: 24px; line-height: 20px; font-size: 13.200px; font-weight: 700; color: #d1d5db; }
input, select { display: block; width: 100%; height: 38px; border: 1px solid #d1d5db; border-radius: 6px; background: #fff; padding: 0 12px; font: 13.500px "Open Sans", sans-serif; color: #111; letter-spacing: -.16px; }
input::placeholder { color: #111; opacity: 1; }
select { height: 39px; }
.submit { grid-column: 1 / 3; height: 40px; border: 0; border-radius: 8px; background: #4f46e5; color: #fff; font: 700 15px "Open Sans", sans-serif; }
.scrollbar { width: 17px; background: #f0f0f0; padding-top: 42px; display: flex; flex-direction: column; align-items: center; }
.thumb { width: 13px; height: 423px; background: #c1c1c1; }
.scrollbar svg { width: 8px; height: 5px; margin-top: 80px; }

.taskbar { height: 40px; flex: none; display: flex; align-items: center; background: #1b2a31; color: #fff; }
.start { width: 48px; display: flex; justify-content: center; }
.start svg, .view svg { width: 16px; height: 16px; }
.search { width: 288px; height: 40px; background: #f1f1f1; border: 1px solid #b9bdbe; display: flex; align-items: center; padding-left: 11px; color: #303030; font-size: 14.500px; }
.glass { width: 17px; height: 17px; margin-right: 11px; }
.terraces { width: 78px; height: 32px; margin: 6px -1px 0 auto; }
.view { width: 48px; display: flex; justify-content: center; }
.grip { width: 5px; height: 16px; margin: 0 13px 0 6px; border: solid #505b60; border-width: 0 1px; }
.apps { display: flex; gap: 1px; margin-left: -1px; }
.app { width: 48px; height: 40px; display: flex; align-items: center; justify-content: center; position: relative; }
.app svg { width: 24px; height: 24px; }
.app svg.wide { width: 34px; height: 28px; margin: 3px 0 0 10px; }
.app.active { background: #4b565c; }
.open::after, .split::after, .active::after { content: ""; position: absolute; left: 4px; right: 4px; bottom: 0; height: 2px; background: #76b9ed; }
.app.active::after { left: 0; right: 0; }
.split::after { background: linear-gradient(90deg, #76b9ed 31px, #45677c 31px, #45677c 32px, #57829f 32px); }
.help { margin-left: 100.500px; }
.help svg { width: 24px; height: 24px; margin-top: 1px; }
.weather { display: flex; align-items: center; margin-left: 88.500px; font-size: 13.800px; }
.weather svg { width: 20px; height: 20px; margin-right: 10px; }
.weather .fit + .fit { margin-left: 9px; }
.tray { display: flex; gap: 8px; margin-left: 23px; }
.tray svg { width: 16px; height: 16px; }
.lang, .clock { display: flex; flex-direction: column; align-items: center; font-size: 11.700px; line-height: 17px; }
.lang { width: 35px; margin-left: 4px; }
.clock { width: 72px; padding-bottom: 2px; }
.notice { width: 47px; height: 40px; padding: 10px 0 0 10px; border-right: 1px solid #6b7579; }
.notice svg { width: 26px; height: 26px; }
</style>
